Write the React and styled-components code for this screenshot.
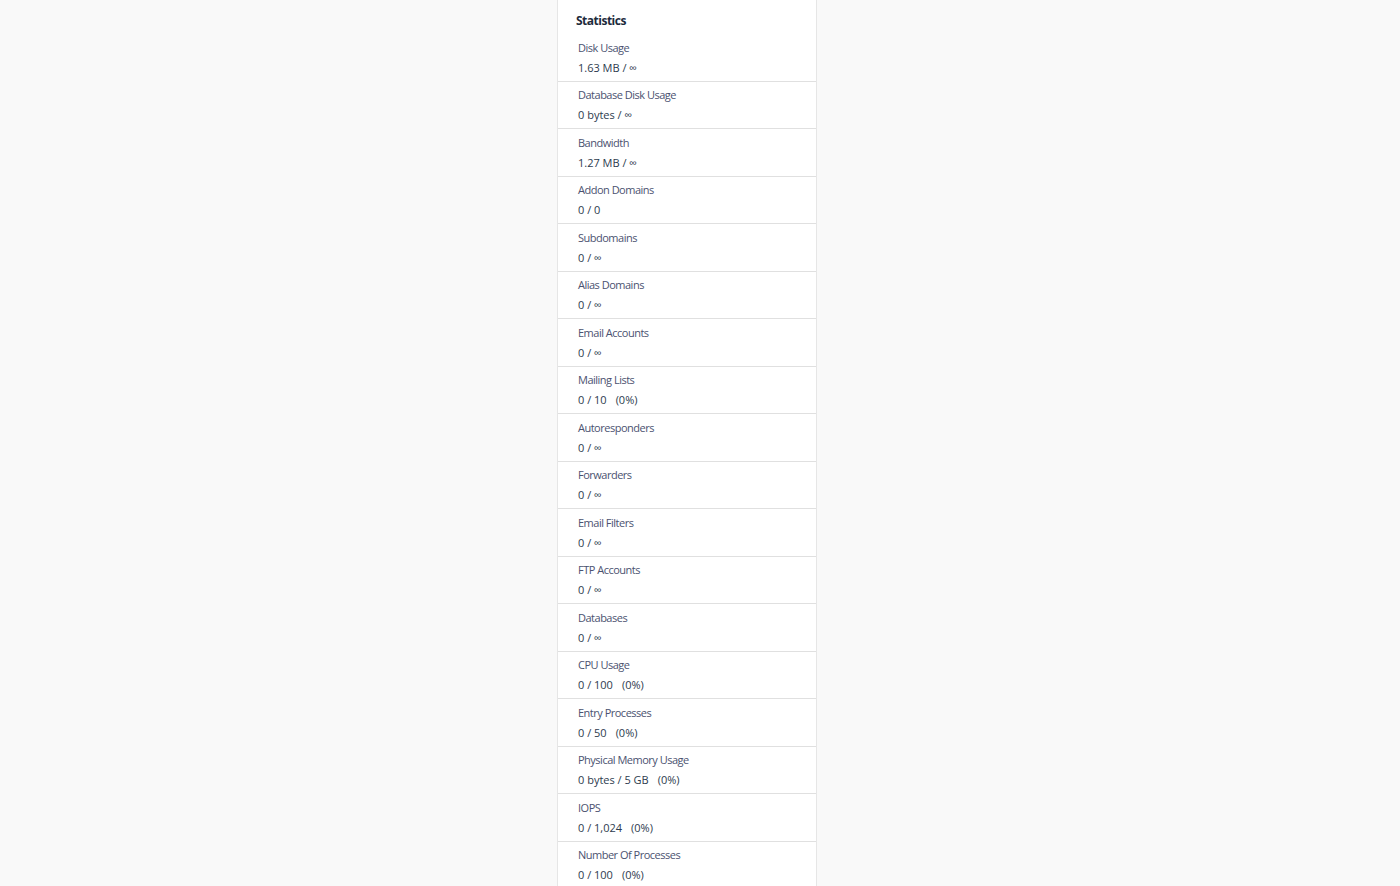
import React from "react";
import styled, { createGlobalStyle } from "styled-components";

const GlobalStyle = createGlobalStyle`
  html, body {
    margin: 0;
    padding: 0;
    background: #f9f9f9;
  }
  body {
    font-family: "Open Sans", "DejaVu Sans", sans-serif;
    -webkit-font-smoothing: antialiased;
  }
`;

const Page = styled.div`
  display: flex;
  justify-content: flex-start;
  padding-left: 557px;
  min-height: 886px;
`;

const Panel = styled.section`
  width: 258px;
  background: #ffffff;
  border-left: 1px solid #e6e6e6;
  border-right: 1px solid #e6e6e6;
  padding-top: 11px;
`;

const Title = styled.h3`
  margin: 0 0 3px;
  padding: 0 18px;
  font-size: 12px;
  line-height: 20px;
  font-weight: 700;
  letter-spacing: -0.5px;
  color: #1d2b3c;
`;

const List = styled.ul`
  list-style: none;
  margin: 0;
  padding: 0;
`;

const Row = styled.li`
  padding: 3.5px 20px 3px;
  border-bottom: 1px solid #e0e0e0;
`;

const Label = styled.div`
  font-size: 11px;
  line-height: 20px;
  letter-spacing: -0.5px;
  color: #4b5270;
`;

const Value = styled.div`
  font-size: 11px;
  line-height: 20px;
  color: #2d3b4e;
`;

const Percent = styled.span`
  margin-left: 9px;
`;

const stats = [
  ["Disk Usage", "1.63 MB / ∞"],
  ["Database Disk Usage", "0 bytes / ∞"],
  ["Bandwidth", "1.27 MB / ∞"],
  ["Addon Domains", "0 / 0"],
  ["Subdomains", "0 / ∞"],
  ["Alias Domains", "0 / ∞"],
  ["Email Accounts", "0 / ∞"],
  ["Mailing Lists", "0 / 10", "(0%)"],
  ["Autoresponders", "0 / ∞"],
  ["Forwarders", "0 / ∞"],
  ["Email Filters", "0 / ∞"],
  ["FTP Accounts", "0 / ∞"],
  ["Databases", "0 / ∞"],
  ["CPU Usage", "0 / 100", "(0%)"],
  ["Entry Processes", "0 / 50", "(0%)"],
  ["Physical Memory Usage", "0 bytes / 5 GB", "(0%)"],
  ["IOPS", "0 / 1,024", "(0%)"],
  ["Number Of Processes", "0 / 100", "(0%)"],
];

export default function App() {
  return (
    <>
      <GlobalStyle />
      <Page>
        <Panel>
          <Title>Statistics</Title>
          <List>
            {stats.map(([label, value, pct]) => (
              <Row key={label}>
                <Label>{label}</Label>
                <Value>
                  {value}
                  {pct && <Percent>{pct}</Percent>}
                </Value>
              </Row>
            ))}
          </List>
        </Panel>
      </Page>
    </>
  );
}
